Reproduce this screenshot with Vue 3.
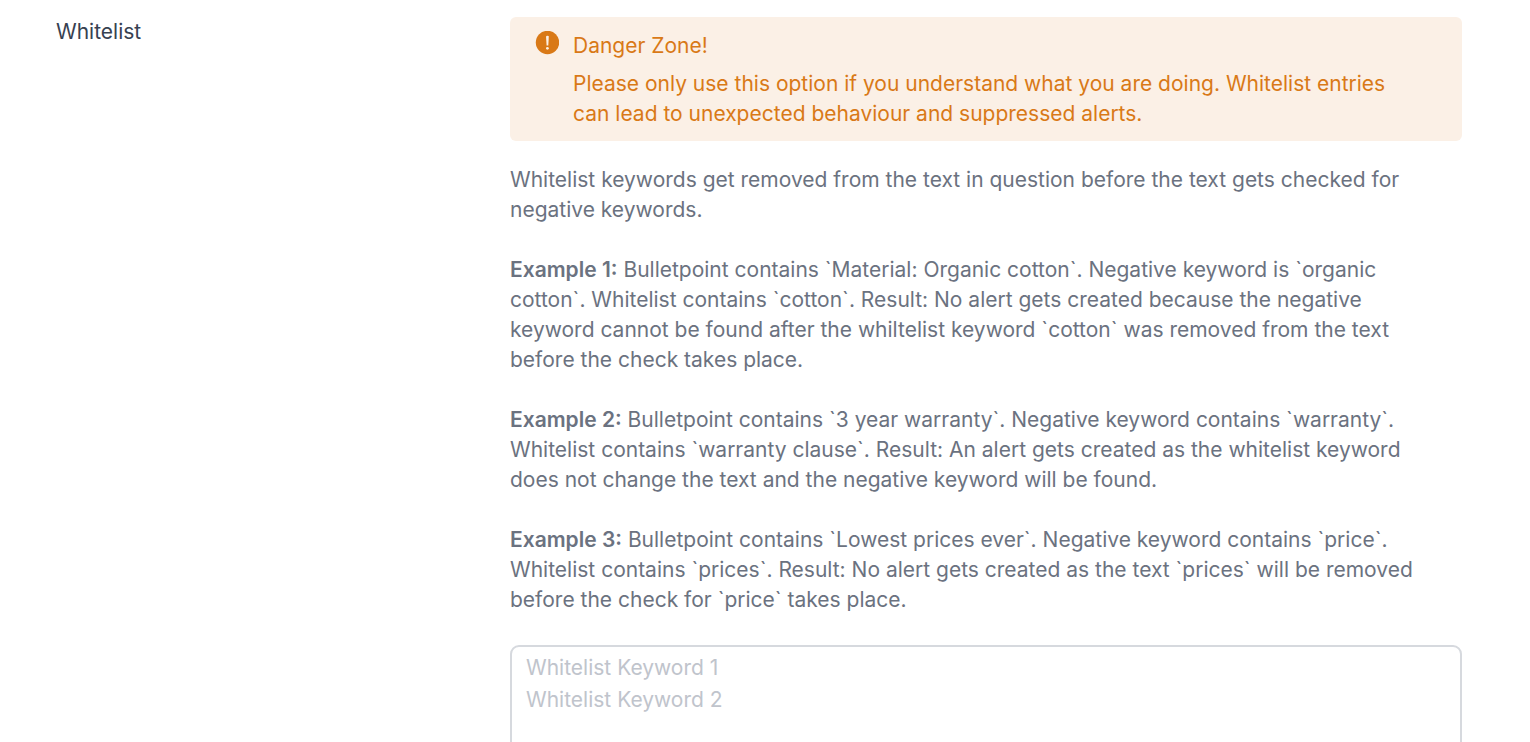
<script setup>
const examples = [
  {
    title: 'Example 1:',
    text: 'Bulletpoint contains `Material: Organic cotton`. Negative keyword is `organic cotton`. Whitelist contains `cotton`. Result: No alert gets created because the negative keyword cannot be found after the whiltelist keyword `cotton` was removed from the text before the check takes place.',
  },
  {
    title: 'Example 2:',
    text: 'Bulletpoint contains `3 year warranty`. Negative keyword contains `warranty`. Whitelist contains `warranty clause`. Result: An alert gets created as the whitelist keyword does not change the text and the negative keyword will be found.',
  },
  {
    title: 'Example 3:',
    text: 'Bulletpoint contains `Lowest prices ever`. Negative keyword contains `price`. Whitelist contains `prices`. Result: No alert gets created as the text `prices` will be removed before the check for `price` takes place.',
  },
]
</script>

<template>
  <main class="row">
    <label class="name" for="whitelist">Whitelist</label>
    <div class="field">
      <div class="alert" role="alert">
        <svg class="alert-icon" viewBox="0 0 24 24" aria-hidden="true">
          <circle cx="12.5" cy="11.5" r="11.7" fill="#d97917" />
          <path d="M11 5.6Q11 4.8 12.4 4.8Q13.8 4.8 13.8 5.6L13.3 14.4H11.6Z" fill="#fbf0e6" />
          <circle cx="12.4" cy="17.3" r="1.4" fill="#fbf0e6" />
        </svg>
        <div class="alert-body">
          <h2>Danger Zone!</h2>
          <p>Please only use this option if you understand what you are doing. Whitelist entries can lead to unexpected behaviour and suppressed alerts.</p>
        </div>
      </div>
      <div class="help">
        <p>Whitelist keywords get removed from the text in question before the text gets checked for negative keywords.</p>
        <p v-for="example in examples" :key="example.title">
          <strong>{{ example.title }}</strong> {{ example.text }}
        </p>
      </div>
      <textarea id="whitelist" rows="6" placeholder="Whitelist Keyword 1&#10;Whitelist Keyword 2"></textarea>
    </div>
  </main>
</template>

<style>
body {
  overflow: hidden;
}
</style>

<style scoped>
.row {
  display: grid;
  grid-template-columns: 430px minmax(0, 1fr);
  gap: 24px;
  height: 100vh;
  box-sizing: border-box;
  padding: 17px 68px 0 56px;
  overflow: hidden;
  background: #fff;
  color: #374151;
  font-family: Inter, "Liberation Sans", sans-serif;
  font-size: 21px;
  line-height: 30px;
}
.name {
  color: #374151;
}
.alert {
  display: flex;
  gap: 14px;
  padding: 14px 48px 12px 25px;
  border-radius: 6px;
  background: #fbf0e6;
  color: #d97917;
}
.alert-icon {
  flex: none;
  width: 24px;
  height: 24px;
}
.alert-body h2 {
  margin: 0 0 8px;
  font-size: 21px;
  font-weight: 400;
}
.alert-body p {
  margin: 0;
}
.help {
  padding: 24px 24px 30px 0;
  color: #6b7280;
}
.help p {
  margin: 0 0 30px;
}
.help p:last-child {
  margin-bottom: 0;
}
.help strong {
  font-weight: 600;
}
textarea {
  display: block;
  width: 100%;
  box-sizing: border-box;
  padding: 5px 14px;
  border: 2px solid #d6d9de;
  border-radius: 9px;
  background: #fff;
  color: #374151;
  font: inherit;
  line-height: 32px;
  resize: none;
}
textarea::placeholder {
  color: #c0c4cc;
  opacity: 1;
}
</style>
